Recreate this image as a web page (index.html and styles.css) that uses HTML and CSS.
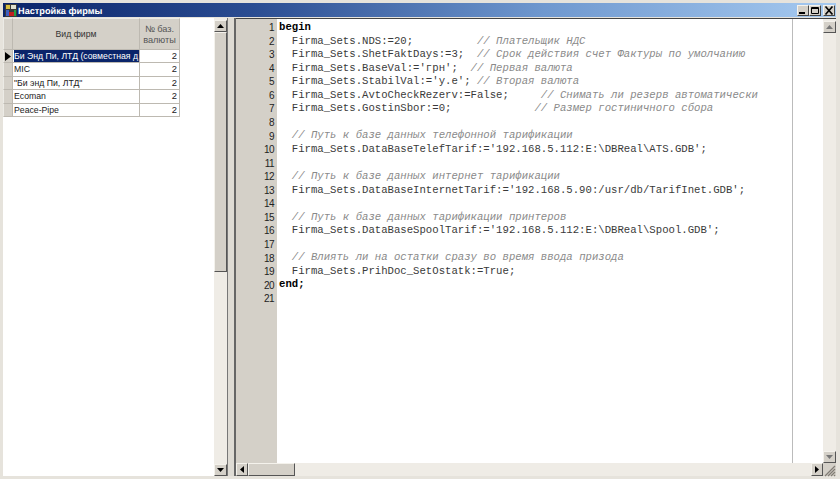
FILE: index.html
```html
<!DOCTYPE html>
<html lang="ru">
<head>
<meta charset="utf-8">
<title>Настройка фирмы</title>
<link rel="stylesheet" href="styles.css">
</head>
<body>
<div class="window">
  <header class="titlebar">
    <svg class="app-icon" width="12" height="13" viewBox="0 0 12 13"><rect width="12" height="13" fill="#3a3a3a"/><rect x="1" y="1" width="4" height="4" fill="#d8c040"/><rect x="6" y="1" width="5" height="4" fill="#e0e0d0"/><rect x="1" y="6" width="3" height="6" fill="#4060c0"/><rect x="4" y="8" width="5" height="4" fill="#c02020"/><rect x="9" y="6" width="2" height="6" fill="#20a040"/></svg>
    <span class="title-text">Настройка фирмы</span>
    <div class="win-buttons">
      <div class="win-btn"><svg width="10" height="9" viewBox="0 0 10 9"><rect x="1" y="6" width="6" height="2" fill="#000"/></svg></div>
      <div class="win-btn"><svg width="10" height="9" viewBox="0 0 10 9"><path d="M1.5 1.5h7v6h-7z M1.5 2.5h7" fill="none" stroke="#000"/></svg></div>
      <div class="win-btn win-close"><svg width="10" height="9" viewBox="0 0 10 9"><path d="M1.5 .5l7 8M8.5 .5l-7 8" stroke="#000" stroke-width="1.6"/></svg></div>
    </div>
  </header>
  <main class="panes">
    <section class="left-pane">
      <div class="grid-area">
        <div class="grid">
          <div class="cell ind head"></div><div class="cell name-h head">Вид фирм</div><div class="cell num-h head">№ баз.<br>валюты</div>
          <div class="cell ind"><svg width="6" height="9" viewBox="0 0 6 9"><path d="M0 0l6 4.5L0 9z" fill="#000"/></svg></div><div class="cell name"><div class="selected">Би Энд Пи, ЛТД (совместная д</div></div><div class="cell num">2</div>
          <div class="cell ind"></div><div class="cell name">MIC</div><div class="cell num">2</div>
          <div class="cell ind"></div><div class="cell name">"Би энд Пи, ЛТД"</div><div class="cell num">2</div>
          <div class="cell ind"></div><div class="cell name">Ecoman</div><div class="cell num">2</div>
          <div class="cell ind"></div><div class="cell name">Peace-Pipe</div><div class="cell num">2</div>
        </div>
      </div>
      <div class="vscroll">
        <div class="sb-btn"><svg width="7" height="4" viewBox="0 0 7 4"><path d="M3.5 0L7 4H0z" fill="#000"/></svg></div>
        <div class="sb-thumb-v"></div>
        <div class="sb-track"></div>
        <div class="sb-btn"><svg width="7" height="4" viewBox="0 0 7 4"><path d="M0 0h7L3.5 4z" fill="#000"/></svg></div>
      </div>
    </section>
    <div class="splitter"></div>
    <section class="right-pane">
      <div class="editor-row">
        <div class="gutter">
          <div>1</div><div>2</div><div>3</div><div>4</div><div>5</div><div>6</div><div>7</div><div>8</div><div>9</div><div>10</div><div>11</div><div>12</div><div>13</div><div>14</div><div>15</div><div>16</div><div>17</div><div>18</div><div>19</div><div>20</div><div>21</div>
        </div>
        <div class="code">
          <div class="line kw">begin</div>
          <div class="line">  Firma_Sets.NDS:=20;          <i>// Плательщик НДС</i></div>
          <div class="line">  Firma_Sets.ShetFaktDays:=3;  <i>// Срок действия счет Фактуры по умолчанию</i></div>
          <div class="line">  Firma_Sets.BaseVal:='грн';  <i>// Первая валюта</i></div>
          <div class="line">  Firma_Sets.StabilVal:='y.e'; <i>// Вторая валюта</i></div>
          <div class="line">  Firma_Sets.AvtoCheckRezerv:=False;     <i>// Снимать ли резерв автоматически</i></div>
          <div class="line">  Firma_Sets.GostinSbor:=0;             <i>// Размер гостиничного сбора</i></div>
          <div class="line"> </div>
          <div class="line">  <i>// Путь к базе данных телефонной тарификации</i></div>
          <div class="line">  Firma_Sets.DataBaseTelefTarif:='192.168.5.112:E:\DBReal\ATS.GDB';</div>
          <div class="line"> </div>
          <div class="line">  <i>// Путь к базе данных интернет тарификации</i></div>
          <div class="line">  Firma_Sets.DataBaseInternetTarif:='192.168.5.90:/usr/db/TarifInet.GDB';</div>
          <div class="line"> </div>
          <div class="line">  <i>// Путь к базе данных тарификации принтеров</i></div>
          <div class="line">  Firma_Sets.DataBaseSpoolTarif:='192.168.5.112:E:\DBReal\Spool.GDB';</div>
          <div class="line"> </div>
          <div class="line">  <i>// Влиять ли на остатки сразу во время ввода призода</i></div>
          <div class="line">  Firma_Sets.PrihDoc_SetOstatk:=True;</div>
          <div class="line kw">end;</div>
          <div class="line"> </div>
        </div>
        <div class="margin-gap"></div>
        <div class="vscroll vscroll-r">
          <div class="sb-btn"><svg width="7" height="4" viewBox="0 0 7 4"><path d="M3.5 0L7 4H0z" fill="#777"/></svg></div>
          <div class="sb-track"></div>
          <div class="sb-btn"><svg width="7" height="4" viewBox="0 0 7 4"><path d="M0 0h7L3.5 4z" fill="#777"/></svg></div>
        </div>
      </div>
      <div class="hscroll-row">
        <div class="sb-btn-h"><svg width="4" height="7" viewBox="0 0 4 7"><path d="M4 0v7L0 3.5z" fill="#000"/></svg></div>
        <div class="sb-thumb-h"></div>
        <div class="sb-track"></div>
        <div class="sb-btn-h"><svg width="4" height="7" viewBox="0 0 4 7"><path d="M0 0l4 3.5L0 7z" fill="#000"/></svg></div>
        <div class="grip"><svg width="13" height="13" viewBox="0 0 13 13"><path d="M12 2L2 12M12 5L5 12M12 8L8 12M12 11l-1 1" stroke="#807c74" stroke-width="1.2"/></svg></div>
      </div>
    </section>
  </main>
</div>
</body>
</html>
```

FILE: styles.css
```css
* { box-sizing: border-box; }
html, body { margin: 0; padding: 0; }
body { width: 840px; height: 479px; overflow: hidden; background: #e6e3dc; font-family: "Liberation Sans", Arial, sans-serif; }
.window { width: 840px; height: 479px; padding: 3px 4px 3px 3px; display: flex; flex-direction: column; }
.titlebar { height: 14px; flex: none; margin-bottom: 1px; display: flex; align-items: center; background: linear-gradient(90deg, #0a246a 0%, #2b4d92 30%, #6f98cf 65%, #a6caf0 100%); color: #fff; padding-right: 1px; }
.app-icon { flex: none; margin-left: 2px; }
.title-text { font-size: 9.2px; font-weight: 700; margin-left: 1px; padding-top: 1px; text-rendering: geometricPrecision; }
.win-buttons { margin-left: auto; display: flex; }
.win-btn { width: 12px; height: 11px; background: #d4d0c8; border: 1px solid; border-color: #f4f2ec #444 #444 #f4f2ec; display: flex; align-items: center; justify-content: center; overflow: hidden; }
.win-btn svg { flex: none; }
.win-close { margin-left: 2px; }
.panes { flex: 1; min-height: 0; display: flex; }
.left-pane { width: 224px; flex: none; display: flex; }
.grid-area { flex: 1; background: #fff; min-width: 0; }
.grid { display: grid; grid-template-columns: 10px 127px 40px; grid-template-rows: 32px repeat(5, 13.4px); width: 177px; }
.cell { border-right: 1px solid #bdb9b1; border-bottom: 1px solid #bdb9b1; font-size: 8.7px; line-height: 12px; color: #222; overflow: hidden; white-space: nowrap; }
.head { background: #d4d0c8; color: #333; display: flex; align-items: center; justify-content: center; text-align: center; border-top: 1px solid #ecebe6; white-space: normal; }
.ind { background: #d4d0c8; border-left: 1px solid #ecebe6; display: flex; align-items: center; justify-content: center; }
.name { padding-left: 1px; }
.selected { background: #0a246a; color: #fff; height: 12px; }
.num { text-align: right; padding-right: 2px; font-size: 9.4px; }
.num-h { font-size: 9.2px; color: #555; line-height: 11px; padding-top: 1px; }
.vscroll { width: 13px; flex: none; padding-top: 2px; display: flex; flex-direction: column; background: #efece6; }
.sb-btn { height: 12px; flex: none; background: #d4d0c8; border: 1px solid; border-color: #f4f2ec #555 #555 #f4f2ec; display: flex; align-items: center; justify-content: center; }
.sb-thumb-v { height: 240px; flex: none; background: #d4d0c8; border: 1px solid; border-color: #f4f2ec #555 #555 #f4f2ec; }
.sb-track { flex: 1; background: #efece6; }
.splitter { width: 9px; flex: none; background: #dedbd4; border-left: 1px solid #777; border-right: 2px solid #666; }
.right-pane { flex: 1; min-width: 0; display: flex; flex-direction: column; }
.editor-row { flex: 1; min-height: 0; display: flex; border-top: 1px solid #444; }
.gutter { width: 41px; flex: none; background: #d4d0c8; padding: 2px 3px 0 0; text-align: right; font-size: 10px; letter-spacing: -0.6px; line-height: 13.56px; color: #222; }
.code { width: 516px; flex: none; background: #fff; border-right: 1px solid #bbb; padding: 2px 0 0 2px; font-family: "Liberation Mono", "Courier New", monospace; font-size: 10.65px; line-height: 13.56px; color: #3a3a3a; overflow: hidden; }
.line { white-space: pre; height: 13.56px; }
.line i { color: #8a8a8a; font-style: italic; }
.kw { font-weight: 700; color: #000; }
.margin-gap { flex: 1; background: #fff; }
.hscroll-row { height: 13px; flex: none; display: flex; background: #efece6; }
.sb-btn-h { width: 12px; flex: none; background: #d4d0c8; border: 1px solid; border-color: #f4f2ec #555 #555 #f4f2ec; display: flex; align-items: center; justify-content: center; }
.sb-thumb-h { width: 47px; flex: none; background: #d4d0c8; border: 1px solid; border-color: #f4f2ec #555 #555 #f4f2ec; }
.grip { width: 13px; flex: none; background: #d4d0c8; }
```
